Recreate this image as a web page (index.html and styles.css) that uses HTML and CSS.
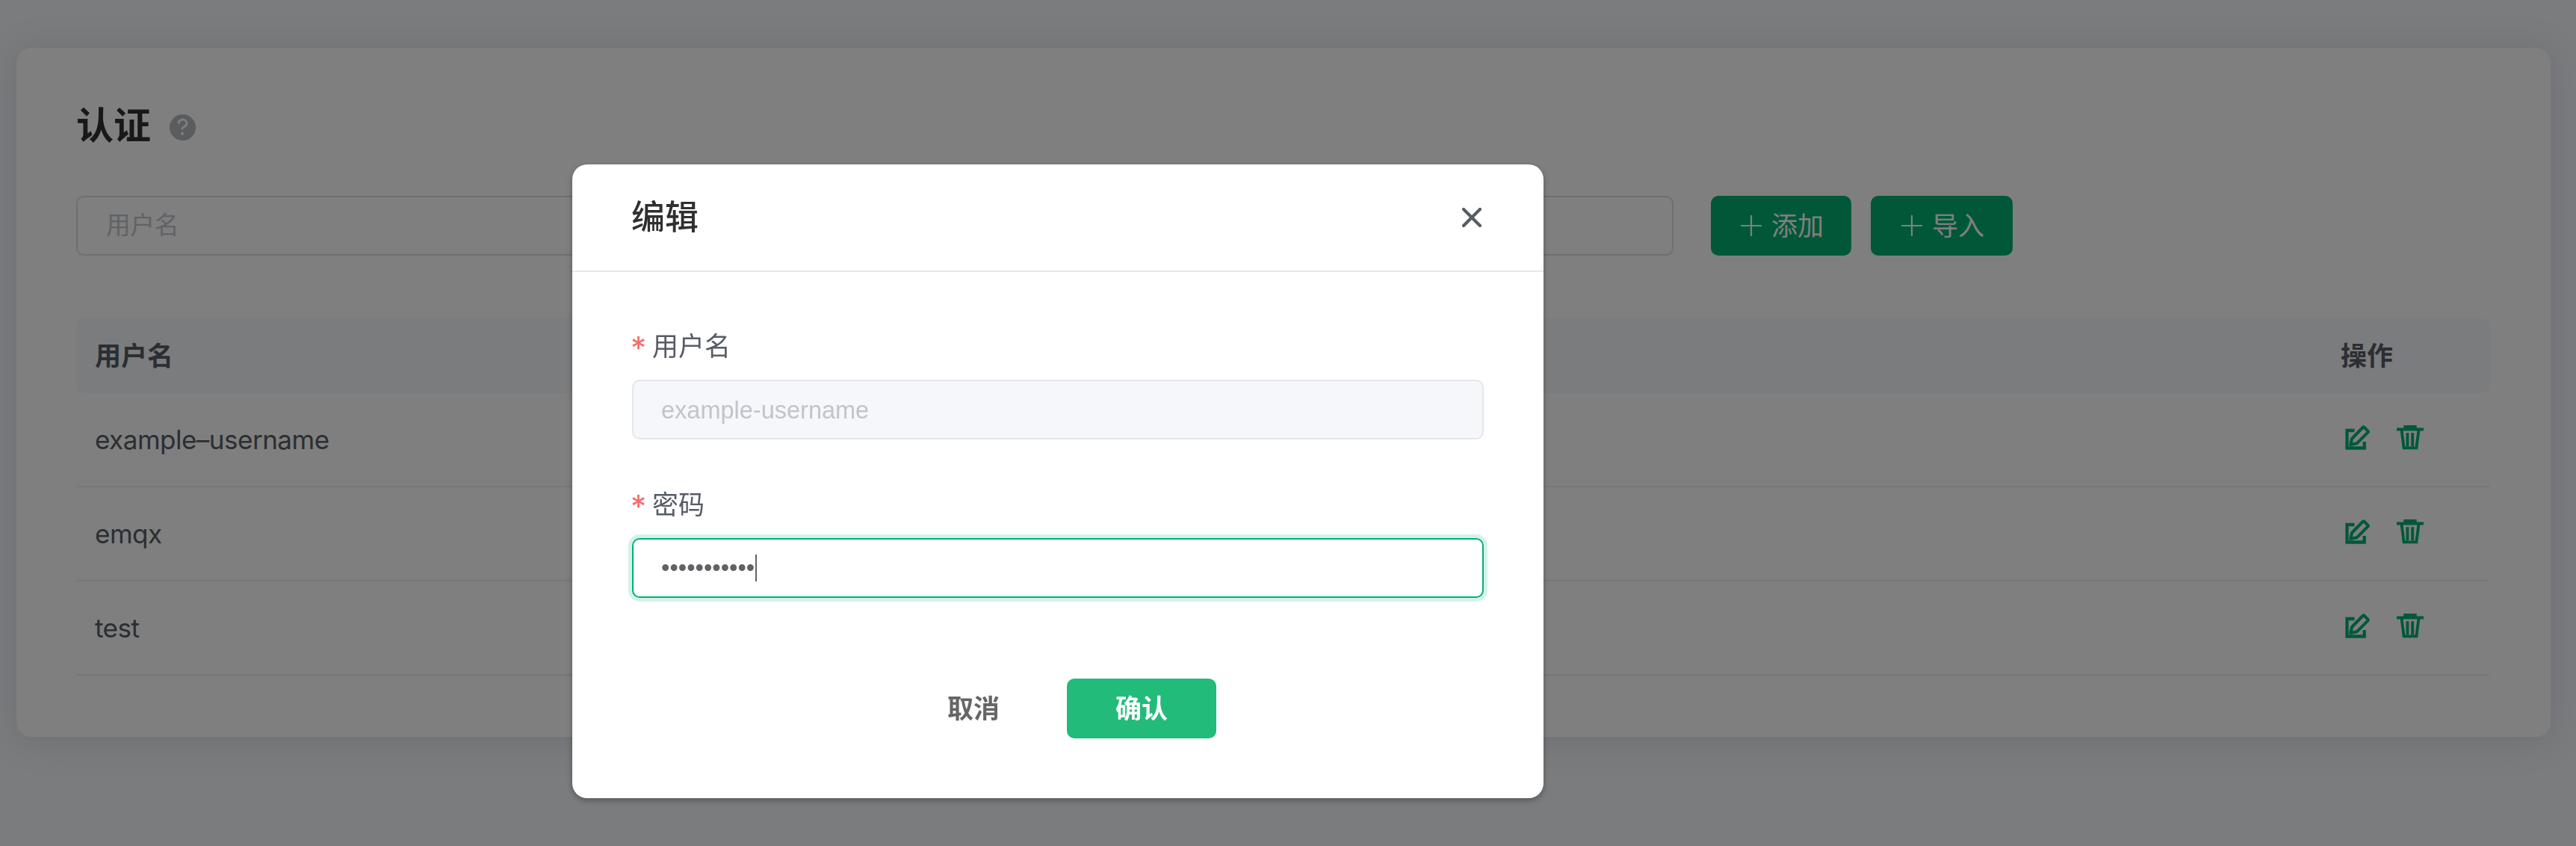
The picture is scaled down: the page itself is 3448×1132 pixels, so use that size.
FILE: index.html
```html
<!DOCTYPE html>
<html lang="zh-CN">
<head>
<meta charset="utf-8">
<title>认证</title>
<link rel="stylesheet" href="styles.css">
</head>
<body>
<svg class="sprite" aria-hidden="true">
  <symbol id="plus" viewBox="0 0 28 28"><path d="M14 0v28M0 14h28" fill="none" stroke="currentColor" stroke-width="2.2"/></symbol>
  <symbol id="edit" viewBox="0 0 33 33"><path d="M12.5 7H2.5v23.5h23.2V22" fill="none" stroke="currentColor" stroke-width="4.3"/><path d="M7.2 26 9 18 23.6 3a1.5 1.5 0 0 1 2.1 0l4.6 4.6a1.5 1.5 0 0 1 0 2.1L15.6 24.3Z" fill="none" stroke="currentColor" stroke-width="4" stroke-linejoin="round"/></symbol>
  <symbol id="trash" viewBox="0 0 36 33"><path d="M9.3 0h17.4v3.4H36v4H0v-4h9.3z" fill="currentColor"/><path d="M6.5 6 9.6 30.4h16.8L29.5 6M14.4 10.2v18M21.2 10.2v18" fill="none" stroke="currentColor" stroke-width="3.9"/></symbol>
</svg>

<main class="card">
  <header class="title">
    <h1>认证</h1>
    <svg class="help" viewBox="0 0 35 35"><circle cx="17.5" cy="17.5" r="17.5" fill="#b4b8bc"/><path d="M12.2 11.6a5.4 4.9 0 1 1 8.3 4.4c-2.2 1.4-3.6 1.4-3.6 3.2" fill="none" stroke="#fff" stroke-width="2.7" stroke-linecap="round"/><circle cx="17" cy="25.8" r="2.1" fill="#fff"/></svg>
  </header>

  <div class="toolbar">
    <div class="search">用户名</div>
    <button class="btn add"><svg><use href="#plus"/></svg><span>添加</span></button>
    <button class="btn import"><svg><use href="#plus"/></svg><span>导入</span></button>
  </div>

  <div class="table">
    <div class="row head"><span>用户名</span><span class="ops">操作</span></div>
    <div class="row"><span>example–username</span><span class="ops"><svg class="edit"><use href="#edit"/></svg><svg class="trash"><use href="#trash"/></svg></span></div>
    <div class="row"><span>emqx</span><span class="ops"><svg class="edit"><use href="#edit"/></svg><svg class="trash"><use href="#trash"/></svg></span></div>
    <div class="row"><span>test</span><span class="ops"><svg class="edit"><use href="#edit"/></svg><svg class="trash"><use href="#trash"/></svg></span></div>
  </div>
</main>

<div class="overlay">
  <section class="dialog" role="dialog">
    <header class="dialog-head">
      <h2>编辑</h2>
      <svg class="close" viewBox="0 0 26 26"><path d="m2 2 22 22M24 2 2 24" stroke="#565c66" stroke-width="4.2" stroke-linecap="round"/></svg>
    </header>
    <div class="dialog-body">
      <div class="label"><span class="star">*</span>用户名</div>
      <div class="input disabled">example-username</div>
      <div class="label second"><span class="star">*</span>密码</div>
      <div class="input focus"><span class="dots">•••••••••••</span><span class="caret"></span></div>
      <footer class="actions">
        <button class="cancel">取消</button>
        <button class="confirm">确认</button>
      </footer>
    </div>
  </section>
</div>
</body>
</html>
```
FILE: styles.css
```css
* { box-sizing: border-box; }

body {
  margin: 0;
  height: 1132px;
  overflow: hidden;
  padding: 64px 34px 0 22px;
  background: #f6f8fb;
  color: #565c66;
  font-family: Inter, "Noto Sans CJK SC", sans-serif;
  font-size: 35px;
}

.sprite { display: none; }
svg { display: block; flex: none; }
h1, h2 { margin: 0; }
button { border: 0; margin: 0; padding: 0; font: inherit; }

.card {
  height: 922px;
  padding: 0 82px 0 80px;
  background: #fff;
  border-radius: 20px;
  box-shadow: 0 4px 50px rgba(80, 80, 120, .16);
}

.title {
  display: flex;
  align-items: center;
  height: 198px;
  padding-top: 10px;
}
.title h1 {
  width: 125px;
  font-size: 50px;
  font-weight: 700;
  line-height: 60px;
  color: #303030;
}
.help { width: 35px; height: 35px; margin-top: 5px; }

.toolbar { display: flex; height: 80px; }
.search {
  width: 2138px;
  padding-left: 38px;
  border: 2px solid #dcdfe6;
  border-radius: 10px;
  font-size: 32.5px;
  line-height: 76px;
  color: #c0c4cc;
}
.btn {
  display: flex;
  align-items: center;
  height: 80px;
  padding-left: 40px;
  gap: 13px;
  background: #00b173;
  border-radius: 10px;
  color: #fff;
}
.btn svg { width: 28px; height: 28px; }
.btn span { padding-bottom: 5px; }
.add { width: 188px; margin-left: 50px; }
.import { width: 190px; margin-left: 26px; padding-left: 41px; }

.table { margin-top: 84px; }
.row {
  display: flex;
  justify-content: space-between;
  align-items: center;
  height: 126px;
  padding: 0 0 1px 25px;
  border-bottom: 2px solid #ebeef5;
  letter-spacing: -.5px;
}
.row.head {
  height: 100px;
  padding-bottom: 5px;
  border: 0;
  border-radius: 10px;
  background: #f6f8fb;
  font-weight: 700;
  letter-spacing: 0;
}
.ops { display: flex; width: 199px; }
.row:not(.head) .ops { padding: 0 0 5px 6px; color: #00b173; }
.edit { width: 33px; height: 33px; }
.trash { width: 36px; height: 33px; margin-left: 36px; }

.overlay {
  position: fixed;
  inset: 0;
  padding: 220px 0 0 766px;
  background: rgba(0, 0, 0, .5);
}
.dialog {
  width: 1300px;
  height: 848px;
  background: #fff;
  border-radius: 20px;
  box-shadow: 0 3px 8px rgba(0, 0, 0, .3);
}
.dialog-head {
  display: flex;
  justify-content: space-between;
  align-items: center;
  height: 144px;
  padding: 0 83px 0 79px;
  border-bottom: 2px solid #e4e7ed;
}
.dialog-head h2 {
  font-size: 45px;
  font-weight: 500;
  line-height: 60px;
  color: #303030;
}
.close { width: 26px; height: 26px; }

.dialog-body { padding: 74px 80px 0; }
.label {
  display: flex;
  height: 70px;
  line-height: 50px;
}
.label.second { margin-top: 62px; }
.star { width: 27px; font-size: 42px; line-height: 56px; margin-left: -2px; margin-right: 2px; color: #f56c6c; }
.input {
  display: flex;
  align-items: center;
  height: 80px;
  padding-left: 37px;
  border: 2px solid #e4e7ed;
  border-radius: 10px;
  font-family: "Liberation Sans", "Noto Sans CJK SC", sans-serif;
  font-size: 32.5px;
  color: #606266;
}
.disabled { padding-top: 2px; background: #f5f7fa; color: #c0c4cc; }
.focus { border-color: #00b173; box-shadow: 0 0 0 5px #d5f2e6; }
.caret { width: 2px; height: 36px; margin-left: 1px; background: #606266; }

.actions {
  display: flex;
  height: 80px;
  margin-top: 108px;
  padding-left: 382px;
  font-weight: 700;
}
.actions button { height: 80px; padding-bottom: 5px; border-radius: 10px; }
.actions .cancel { width: 145px; background: none; color: #666; text-align: left; padding-left: 40px; }
.actions .confirm { width: 200px; margin-left: 55px; background: #22bb7a; color: #fff; }
```
